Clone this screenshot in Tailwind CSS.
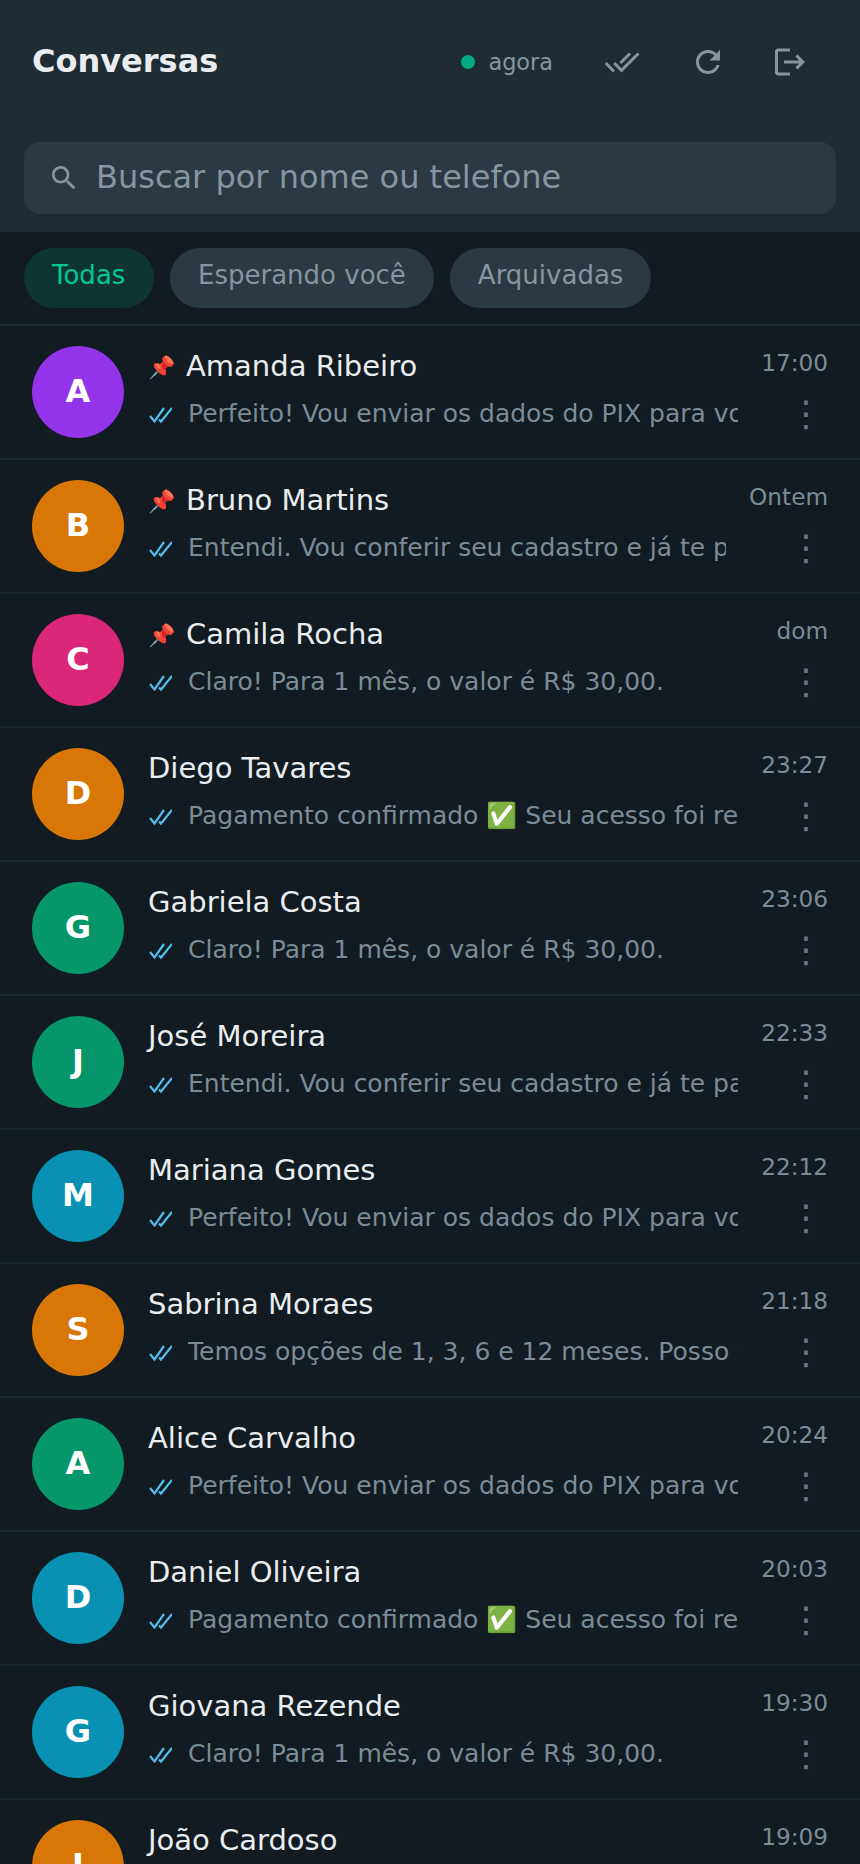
<!DOCTYPE html>
<html lang="en">
<head>
<meta charset="UTF-8">
<title>Conversas</title>
<script src="https://cdn.jsdelivr.net/npm/@tailwindcss/browser@4"></script>
</head>
<body class="bg-[#111b21] font-['DejaVu_Sans',sans-serif] h-[1864px] overflow-hidden">

<!-- Header -->
<div class="bg-[#202c33] h-[232px] px-6">
  <div class="flex items-center h-[124px] pl-2 pr-7">
    <h1 class="text-[32px] font-bold text-[#e9edef] flex-1 -mt-[2px]">Conversas</h1>
    <span class="w-[14px] h-[14px] rounded-full bg-[#00a884] mr-[13px]"></span>
    <span class="text-[22.4px] text-[#8696a0] mr-[51px] mt-[1px]">agora</span>
    <svg class="w-9 h-9 mr-[50px]" viewBox="0 0 24 24" fill="#8696a0"><path d="M18 7l-1.41-1.41-6.34 6.34 1.41 1.41L18 7zm4.24-1.41L11.66 16.17 7.48 12l-1.41 1.41L11.66 19l12-12-1.42-1.41zM.41 13.41L6 19l1.41-1.41L1.83 12 .41 13.41z"/></svg>
    <svg class="w-9 h-9 mr-[46px]" viewBox="0 0 24 24" fill="#8696a0"><path d="M17.65 6.35C16.2 4.9 14.21 4 12 4c-4.42 0-7.99 3.58-7.99 8s3.57 8 7.99 8c3.73 0 6.84-2.55 7.73-6h-2.08c-.82 2.33-3.04 4-5.65 4-3.31 0-6-2.69-6-6s2.69-6 6-6c1.66 0 3.14.69 4.22 1.78L13 11h7V4l-2.35 2.35z"/></svg>
    <svg class="w-9 h-9" viewBox="0 0 24 24" fill="#8696a0"><path d="M17 7l-1.41 1.41L18.17 11H8v2h10.17l-2.58 2.58L17 17l5-5zM4 5h8V3H4c-1.1 0-2 .9-2 2v14c0 1.1.9 2 2 2h8v-2H4V5z"/></svg>
  </div>
  <div class="mt-[18px] h-[72px] rounded-2xl bg-[#2a3942] flex items-center pl-6 gap-4">
    <svg class="w-8 h-8" viewBox="0 0 24 24" fill="#8696a0"><path d="M15.5 14h-.79l-.28-.27C15.41 12.59 16 11.11 16 9.5 16 5.91 13.09 3 9.5 3S3 5.91 3 9.5 5.91 16 9.5 16c1.61 0 3.09-.59 4.23-1.57l.27.28v.79l5 4.99L20.49 19l-4.99-5zm-6 0C7.01 14 5 11.99 5 9.5S7.01 5 9.5 5 14 7.01 14 9.5 11.99 14 9.5 14z"/></svg>
    <span class="text-[32px] text-[#8696a0] -mt-[2px]">Buscar por nome ou telefone</span>
  </div>
</div>

<!-- Filters -->
<div class="h-[94px] border-b-2 border-[#202c33] flex gap-4 px-6 pt-4">
  <div class="h-[60px] min-w-[130px] rounded-full bg-[#0f3533] text-[#00c896] text-[26px] px-7 pt-[8px]">Todas</div>
  <div class="h-[60px] rounded-full bg-[#2a3942] text-[#8696a0] text-[26px] px-7 pt-[8px]">Esperando você</div>
  <div class="h-[60px] rounded-full bg-[#2a3942] text-[#8696a0] text-[26px] px-7 pt-[8px]">Arquivadas</div>
</div>

<!-- Conversation list -->
<div id="list"></div>

<script>
  const conversations = [
    { name: 'Amanda Ribeiro', initial: 'A', color: 'bg-[#9333ea]', time: '17:00', pinned: true, msg: 'Perfeito! Vou enviar os dados do PIX para você agora mesmo.' },
    { name: 'Bruno Martins', initial: 'B', color: 'bg-[#d97706]', time: 'Ontem', pinned: true, msg: 'Entendi. Vou conferir seu cadastro e já te passo o retorno.' },
    { name: 'Camila Rocha', initial: 'C', color: 'bg-[#db2777]', time: 'dom', pinned: true, msg: 'Claro! Para 1 mês, o valor é R$ 30,00.' },
    { name: 'Diego Tavares', initial: 'D', color: 'bg-[#d97706]', time: '23:27', msg: 'Pagamento confirmado ✅ Seu acesso foi renovado com sucesso.' },
    { name: 'Gabriela Costa', initial: 'G', color: 'bg-[#059669]', time: '23:06', msg: 'Claro! Para 1 mês, o valor é R$ 30,00.' },
    { name: 'José Moreira', initial: 'J', color: 'bg-[#059669]', time: '22:33', msg: 'Entendi. Vou conferir seu cadastro e já te passo o retorno.' },
    { name: 'Mariana Gomes', initial: 'M', color: 'bg-[#0891b2]', time: '22:12', msg: 'Perfeito! Vou enviar os dados do PIX para você agora mesmo.' },
    { name: 'Sabrina Moraes', initial: 'S', color: 'bg-[#d97706]', time: '21:18', msg: 'Temos opções de 1, 3, 6 e 12 meses. Posso te ajudar?' },
    { name: 'Alice Carvalho', initial: 'A', color: 'bg-[#059669]', time: '20:24', msg: 'Perfeito! Vou enviar os dados do PIX para você agora mesmo.' },
    { name: 'Daniel Oliveira', initial: 'D', color: 'bg-[#0891b2]', time: '20:03', msg: 'Pagamento confirmado ✅ Seu acesso foi renovado com sucesso.' },
    { name: 'Giovana Rezende', initial: 'G', color: 'bg-[#0891b2]', time: '19:30', msg: 'Claro! Para 1 mês, o valor é R$ 30,00.' },
    { name: 'João Cardoso', initial: 'J', color: 'bg-[#d97706]', time: '19:09', msg: 'Perfeito! Vou enviar os dados do PIX para você agora mesmo.' },
  ];

  const list = document.getElementById('list');
  conversations.forEach(c => {
    const row = document.createElement('div');
    row.className = 'h-[134px] border-b-2 border-[#1a262d] flex items-center pl-8 pr-8 gap-6';
    row.innerHTML = `
      <div class="w-[92px] h-[92px] rounded-full shrink-0 flex items-center justify-center text-white text-[32px] font-bold pb-[2px] ${c.color}">${c.initial}</div>
      <div class="flex-1 min-w-0 -mt-[5px]">
        <div class="flex items-center gap-[11px] h-[44px] pt-[2px]">
          ${c.pinned ? '<span class="text-[22px] leading-none mt-[2px]">📌</span>' : ''}
          <span class="text-[29px] text-[#e9edef] whitespace-nowrap">${c.name}</span>
        </div>
        <div class="flex items-center gap-[16px] h-[44px] mt-1">
          <svg class="w-6 h-6 shrink-0 -mt-[2px]" viewBox="0 0 24 24" fill="none" stroke="#53bdeb" stroke-width="2.2"><path d="M2 15l4.500 5.500L16 7M11 18.500l2 2L24 7"/></svg>
          <span class="text-[25px] text-[#7b8c97] whitespace-nowrap overflow-hidden">${c.msg}</span>
        </div>
      </div>
      <div class="shrink-0 flex flex-col items-end -mt-[5px] -ml-[1px]">
        <span class="text-[23.2px] text-[#7b8c97] h-[44px] pt-[2px]">${c.time}</span>
        <span class="w-[44px] h-[44px] mt-1 flex items-center justify-center text-[36px] text-[#667781]">⋮</span>
      </div>`;
    list.appendChild(row);
  });
</script>
</body>
</html>
